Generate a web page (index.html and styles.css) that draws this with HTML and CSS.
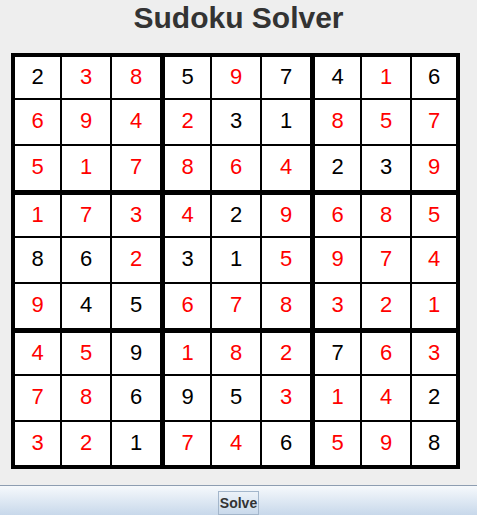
FILE: index.html
```html
<!DOCTYPE html>
<html lang="en">
<head>
<meta charset="UTF-8" />
<title>Sudoku Solver</title>
<link rel="stylesheet" href="styles.css">
</head>
<body>

<h1 class="title">Sudoku Solver</h1>

<div class="board">
  <div>2</div><div class="r">3</div><div class="r">8</div><div>5</div><div class="r">9</div><div>7</div><div>4</div><div class="r">1</div><div>6</div>
  <div class="r">6</div><div class="r">9</div><div class="r">4</div><div class="r">2</div><div>3</div><div>1</div><div class="r">8</div><div class="r">5</div><div class="r">7</div>
  <div class="r">5</div><div class="r">1</div><div class="r">7</div><div class="r">8</div><div class="r">6</div><div class="r">4</div><div>2</div><div>3</div><div class="r">9</div>
  <div class="r">1</div><div class="r">7</div><div class="r">3</div><div class="r">4</div><div>2</div><div class="r">9</div><div class="r">6</div><div class="r">8</div><div class="r">5</div>
  <div>8</div><div>6</div><div class="r">2</div><div>3</div><div>1</div><div class="r">5</div><div class="r">9</div><div class="r">7</div><div class="r">4</div>
  <div class="r">9</div><div>4</div><div>5</div><div class="r">6</div><div class="r">7</div><div class="r">8</div><div class="r">3</div><div class="r">2</div><div class="r">1</div>
  <div class="r">4</div><div class="r">5</div><div>9</div><div class="r">1</div><div class="r">8</div><div class="r">2</div><div>7</div><div class="r">6</div><div class="r">3</div>
  <div class="r">7</div><div class="r">8</div><div>6</div><div>9</div><div>5</div><div class="r">3</div><div class="r">1</div><div class="r">4</div><div>2</div>
  <div class="r">3</div><div class="r">2</div><div>1</div><div class="r">7</div><div class="r">4</div><div>6</div><div class="r">5</div><div class="r">9</div><div>8</div>
</div>

<div class="button-bar">
  <button class="solve-btn">Solve</button>
</div>

</body>
</html>
```

FILE: styles.css
```css
/* Base */
body {
  margin: 0;
  background: #eeeeee;
  font-family: 'Liberation Sans', Arial, sans-serif;
  color: #000;
}

.title {
  margin: 0;
  font-size: 30px;
  line-height: 36px;
  font-weight: bold;
  text-align: center;
  color: #333;
}

/* Board: 9x9 cells, thick lines between 3x3 blocks */
.board {
  display: grid;
  grid-template-columns: 49px repeat(8, 50px);
  grid-template-rows: 45px repeat(7, 46px) 49px;
  width: 449px;
  margin: 17px 0 0 11px;
}
.board div {
  box-sizing: border-box;
  display: flex;
  align-items: center;
  justify-content: center;
  padding-bottom: 2px;
  background: #fff;
  border-style: solid;
  border-color: #000;
  border-width: 2px 0 0 2px;
  font-size: 22px;
}
.board div.r {
  color: #ff0000;
}

/* columns */
.board div:nth-child(9n+1) { border-left-width: 4px; }
.board div:nth-child(9n+4),
.board div:nth-child(9n+7) { border-left-width: 5px; }
.board div:nth-child(9n) { border-right-width: 4px; }

/* rows */
.board div:nth-child(-n+9) { border-top-width: 4px; }
.board div:nth-child(n+28):nth-child(-n+36),
.board div:nth-child(n+55):nth-child(-n+63) { border-top-width: 5px; }
.board div:nth-child(n+73) { border-bottom-width: 4px; }

/* Bottom button bar */
.button-bar {
  margin-top: 16px;
  height: 30px;
  border-top: 1px solid #8d9db1;
  background: linear-gradient(#f6f9fc, #c6d7ea);
  display: flex;
  justify-content: center;
  align-items: center;
}
.solve-btn {
  font-family: 'Liberation Sans', Arial, sans-serif;
  font-size: 14px;
  font-weight: bold;
  color: #333;
  background: transparent;
  border: 1px solid #a3b6cb;
  padding: 4px 1px 3px 1px;
  margin-top: 4px;
  line-height: 15px;
}
```
